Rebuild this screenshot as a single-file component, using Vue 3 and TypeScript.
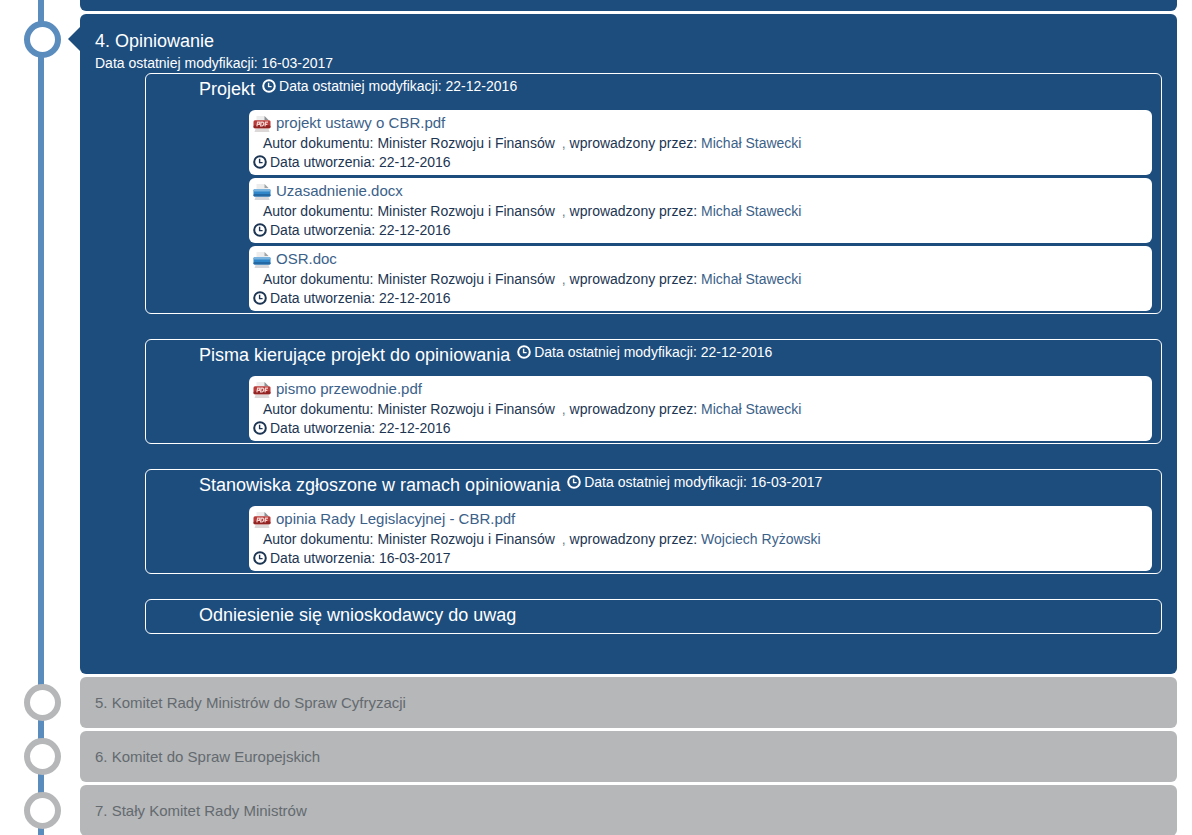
<script setup lang="ts">
interface Doc {
  name: string
  kind: 'pdf' | 'doc'
  person: string
  created: string
}
interface Section {
  title: string
  modified?: string
  docs: Doc[]
}

const sections: Section[] = [
  {
    title: 'Projekt',
    modified: '22-12-2016',
    docs: [
      { name: 'projekt ustawy o CBR.pdf', kind: 'pdf', person: 'Michał Stawecki', created: '22-12-2016' },
      { name: 'Uzasadnienie.docx', kind: 'doc', person: 'Michał Stawecki', created: '22-12-2016' },
      { name: 'OSR.doc', kind: 'doc', person: 'Michał Stawecki', created: '22-12-2016' },
    ],
  },
  {
    title: 'Pisma kierujące projekt do opiniowania',
    modified: '22-12-2016',
    docs: [{ name: 'pismo przewodnie.pdf', kind: 'pdf', person: 'Michał Stawecki', created: '22-12-2016' }],
  },
  {
    title: 'Stanowiska zgłoszone w ramach opiniowania',
    modified: '16-03-2017',
    docs: [{ name: 'opinia Rady Legislacyjnej - CBR.pdf', kind: 'pdf', person: 'Wojciech Ryżowski', created: '16-03-2017' }],
  },
  { title: 'Odniesienie się wnioskodawcy do uwag', docs: [] },
]

const upcoming: string[] = [
  '5. Komitet Rady Ministrów do Spraw Cyfryzacji',
  '6. Komitet do Spraw Europejskich',
  '7. Stały Komitet Rady Ministrów',
]
</script>

<template>
  <main class="page">
    <ol class="timeline">
      <li class="stage">
        <div class="rail"></div>
        <div class="panel previous"></div>
      </li>

      <li class="stage">
        <div class="rail"><span class="dot active"></span></div>
        <article class="panel current">
          <h2 class="stage-title">4. Opiniowanie</h2>
          <p class="stage-date">Data ostatniej modyfikacji: 16-03-2017</p>

          <div class="sections">
            <section v-for="s in sections" :key="s.title" class="section">
              <header class="section-head">
                <h3>{{ s.title }}</h3>
                <p v-if="s.modified" class="stamp">
                  <svg class="clock" viewBox="0 0 14 14" aria-hidden="true">
                    <circle cx="7" cy="7" r="5.8" />
                    <path d="M6.6 3.8V7.6H9.6" />
                  </svg>
                  <span>Data ostatniej modyfikacji: {{ s.modified }}</span>
                </p>
              </header>
              <ul v-if="s.docs.length" class="docs">
                <li v-for="d in s.docs" :key="d.name" class="doc">
                  <div class="doc-name">
                    <svg v-if="d.kind === 'pdf'" class="file" viewBox="0 0 18 18" aria-hidden="true">
                      <path d="M3.5 2H11.5L15.5 6V17H3.5Z" fill="#ededee" />
                      <path d="M11.5 2L15.5 6H11.5Z" fill="#8d9093" />
                      <path d="M2.5 15H15.5L16.5 18H1.5Z" fill="#dcd8d8" />
                      <rect x="0.5" y="6.2" width="17" height="8" rx="1.5" fill="#b93a38" />
                      <rect x="0.5" y="11.2" width="17" height="3" rx="1.5" fill="#922423" />
                      <path d="M3.9 12.4L4.6 8.2H6.8L6.5 10.4H4.4M8.2 8.2L7.6 12H9.2L10.5 11L10.8 9L9.9 8.2ZM12 12.4L12.6 8.2H15M12.4 10.3H14.4" fill="none" stroke="#f2d3d0" stroke-width="1.2" />
                    </svg>
                    <svg v-else class="file" viewBox="0 0 18 18" aria-hidden="true">
                      <path d="M3.5 2H11.5L15.5 6V17H3.5Z" fill="#ededee" />
                      <path d="M11.5 2L15.5 6H11.5Z" fill="#a2a5a8" />
                      <path d="M2.5 15H15.5L16.5 18H1.5Z" fill="#d5d7da" />
                      <rect x="0.5" y="7" width="17" height="7.5" rx="1.5" fill="#2f86c9" />
                      <rect x="0.5" y="7" width="17" height="2.5" rx="1.2" fill="#7ab4df" />
                      <rect x="0.5" y="12" width="17" height="2.5" rx="1.2" fill="#2468a4" />
                    </svg>
                    <a href="#">{{ d.name }}</a>
                  </div>
                  <p class="doc-author">
                    <span>Autor dokumentu: Minister Rozwoju i Finansów</span>
                    <span><span class="comma">,</span> wprowadzony przez: <a href="#">{{ d.person }}</a></span>
                  </p>
                  <p class="doc-created">
                    <svg class="clock" viewBox="0 0 14 14" aria-hidden="true">
                      <circle cx="7" cy="7" r="5.8" />
                      <path d="M6.6 3.8V7.6H9.6" />
                    </svg>
                    <span>Data utworzenia: {{ d.created }}</span>
                  </p>
                </li>
              </ul>
            </section>
          </div>
        </article>
      </li>

      <li v-for="title in upcoming" :key="title" class="stage">
        <div class="rail"><span class="dot"></span></div>
        <article class="panel upcoming">
          <h2>{{ title }}</h2>
        </article>
      </li>
    </ol>
  </main>
</template>

<style>
body {
  margin: 0;
  background: #fff;
}
</style>

<style scoped>
.page {
  height: 100vh;
  overflow: hidden;
  font-family: "Liberation Sans", Arial, sans-serif;
  font-size: 14px;
  color: #1c3552;
}
h2,
h3,
p,
ol,
ul {
  margin: 0;
  padding: 0;
  font-weight: normal;
  list-style: none;
}
a {
  color: #3b6189;
  text-decoration: none;
}
.timeline {
  display: flex;
  flex-direction: column;
  gap: 3px;
  position: relative;
  padding-right: 15px;
}
.timeline::before {
  content: "";
  position: absolute;
  top: 0;
  bottom: 0;
  left: 38px;
  width: 6px;
  background: #5b8cbe;
}
.stage {
  display: flex;
}
.rail {
  flex: none;
  box-sizing: border-box;
  width: 80px;
  padding: 7px 0 0 24px;
}
.dot {
  display: block;
  position: relative;
  box-sizing: border-box;
  width: 37px;
  height: 37px;
  border: 6px solid #b5b7b9;
  border-radius: 50%;
  background: #fff;
}
.dot.active {
  border-color: #5b8cbe;
}
.panel {
  flex: 1;
  min-width: 0;
  box-sizing: border-box;
  border-radius: 6px;
  background: #1d4d7d;
}
.previous {
  height: 11px;
  border-radius: 0 0 6px 6px;
}
.current {
  position: relative;
  padding: 17px 15px 40px;
  color: #fff;
}
.current::before {
  content: "";
  position: absolute;
  top: 13px;
  left: -12px;
  border: solid transparent;
  border-width: 12px 12px 12px 0;
  border-right-color: #1d4d7d;
}
.stage-title {
  font-size: 18px;
  line-height: 20px;
}
.stage-date {
  margin-top: 2px;
  line-height: 20px;
}
.sections {
  display: flex;
  flex-direction: column;
  gap: 25px;
  margin-left: 50px;
}
.section {
  border: 1px solid #fff;
  border-radius: 6px;
}
.section-head {
  display: flex;
  align-items: flex-start;
  gap: 7px;
  min-height: 33px;
  padding-left: 53px;
}
.section-head h3 {
  padding-top: 5px;
  font-size: 18px;
  line-height: 20px;
}
.stamp,
.doc-created {
  display: flex;
  align-items: center;
  gap: 3px;
}
.stamp {
  padding-top: 2px;
  line-height: 20px;
}
.clock {
  flex: none;
  width: 14px;
  height: 14px;
  fill: none;
  stroke: currentColor;
  stroke-width: 2;
}
.clock path {
  stroke-width: 1.4;
}
.docs {
  display: flex;
  flex-direction: column;
  gap: 3px;
  padding: 3px 9px 2px 103px;
}
.doc {
  padding: 3px 4px 4px;
  border-radius: 6px;
  background: #fff;
  color: #1c3552;
}
.doc-name {
  display: flex;
  align-items: center;
  gap: 5px;
  font-size: 15px;
  line-height: 20px;
}
.file {
  flex: none;
  width: 18px;
  height: 18px;
}
.doc-author {
  display: flex;
  gap: 7px;
  padding-left: 10px;
  line-height: 20px;
}
.comma {
  color: #6d7f93;
}
.doc-created {
  line-height: 18px;
}
.upcoming {
  padding: 16px 15px 15px;
  background: #b5b7b9;
  color: #646a6f;
}
.upcoming h2 {
  font-size: 15px;
  line-height: 20px;
}
</style>
